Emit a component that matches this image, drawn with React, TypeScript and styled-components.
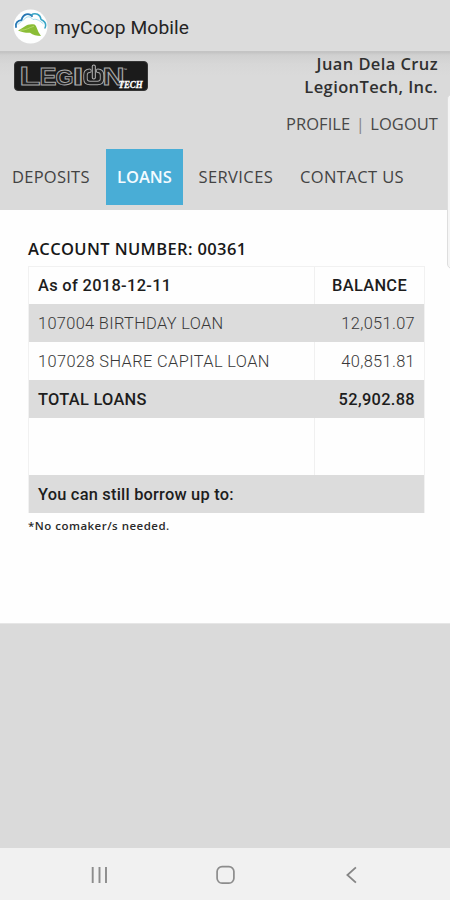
import React from "react";
import styled, { createGlobalStyle } from "styled-components";

const GlobalStyle = createGlobalStyle`
  * { box-sizing: border-box; }
  html, body { margin: 0; padding: 0; background: #fff; }
`;

const Screen = styled.div`
  position: relative;
  display: flex;
  flex-direction: column;
  width: 450px;
  height: 900px;
  overflow: hidden;
  background: #dadada;
  color: #222;
  font-family: "Open Sans", sans-serif;
`;

const AppBar = styled.header`
  display: flex;
  align-items: center;
  flex: none;
  gap: 6px;
  height: 52px;
  padding: 2px 12px 0;
  background: #dcdcdc;
  border-bottom: 1px solid #c4c4c4;
`;

const AppTitle = styled.h1`
  margin: 2px 0 0;
  font: 400 19.2px/28px Roboto, sans-serif;
  letter-spacing: 0.1px;
  color: #242424;
  white-space: nowrap;
`;

const SiteHeader = styled.section`
  flex: none;
  height: 158px;
  background: linear-gradient(#c2c2c2 0, #d0d0d0 3px, #d7d7d7 12px, #dadada 24px);
`;

const Masthead = styled.div`
  display: flex;
  justify-content: space-between;
  height: 97px;
  padding: 9px 12px 0 14px;
`;

const Account = styled.div`
  display: flex;
  flex-direction: column;
  align-items: flex-end;
  margin-top: -9px;
  white-space: nowrap;
`;

const Identity = styled.strong`
  font-size: 16.5px;
  font-weight: 600;
  line-height: 23px;
  letter-spacing: 0.4px;
  color: #303030;
`;

const AccountLinks = styled.div`
  display: flex;
  gap: 5.5px;
  margin-top: 14px;
  font-size: 16.5px;
  line-height: 23px;
  color: #858585;
`;

const AccountLink = styled.span`
  letter-spacing: 0.05px;
  color: #484848;
`;

const Tabs = styled.nav`
  display: grid;
  grid-template-columns: 94px 77px 107px 1fr;
  height: 56px;
  padding-left: 12px;
`;

const Tab = styled.div<{ $active?: boolean; $inset?: number; $spacing?: number }>`
  padding-left: ${(p) => p.$inset ?? 0}px;
  font-size: 16.5px;
  font-weight: ${(p) => (p.$active ? 600 : 500)};
  line-height: 56px;
  letter-spacing: ${(p) => p.$spacing ?? 0}px;
  color: ${(p) => (p.$active ? "#f3fbff" : "#434343")};
  background: ${(p) => (p.$active ? "#49add6" : "transparent")};
  white-space: nowrap;
`;

const Content = styled.main`
  flex: none;
  height: 413px;
  padding: 27px 25px 0 28px;
  background: #fefefe;
`;

const AccountNumber = styled.h2`
  margin: 0 0 5px;
  font-size: 16.5px;
  font-weight: 600;
  line-height: 24px;
  letter-spacing: 0.38px;
  color: #181818;
  white-space: nowrap;
`;

const LoanTable = styled.div`
  border: solid #f1f1f1;
  border-width: 1px 1px 0;
`;

const LoanRow = styled.div<{ $shaded?: boolean; $height?: number; $bold?: boolean }>`
  display: grid;
  grid-template-columns: 285px 1fr;
  grid-template-rows: 100%;
  height: ${(p) => p.$height ?? 38}px;
  background: ${(p) => (p.$shaded ? "#dcdcdc" : "#fefefe")};
  color: ${(p) => (p.$bold ? "#1d1d1d" : "#383838")};
  font-family: Roboto, sans-serif;
  font-size: 16.4px;
  font-weight: ${(p) => (p.$bold ? 500 : 300)};
  line-height: ${(p) => (p.$height ? 37 : 39)}px;
  white-space: nowrap;
  > :last-child {
    border-left: 1px solid ${(p) => (p.$shaded ? "#dcdcdc" : "#f0f0f0")};
  }
`;

const Cell = styled.div<{ $align?: string; $spacing?: number }>`
  padding: 0 9px;
  text-align: ${(p) => p.$align ?? "left"};
  letter-spacing: ${(p) => p.$spacing ?? 0.33}px;
`;

const Note = styled.p`
  margin: 4px 0 0;
  font-size: 11.5px;
  font-weight: 600;
  line-height: 17px;
  letter-spacing: 0.48px;
  color: #2a2a2a;
`;

const Footer = styled.footer`
  flex: 1;
  border-top: 1px solid #e6e6e6;
  background: #dadada;
`;

const SystemBar = styled.nav`
  display: flex;
  flex: none;
  justify-content: center;
  align-items: center;
  gap: 102px;
  height: 52px;
  padding-top: 1px;
  background: #f1f1f1;
`;

const EdgeHandle = styled.div`
  position: absolute;
  top: 94px;
  right: -7px;
  width: 10px;
  height: 175px;
  border: 1px solid #dedede;
  border-radius: 5px;
  background: #f6f6f6;
`;

const LogoBadge = styled.svg`
  display: block;
  overflow: visible;
`;

const CoopLogo = () => (
  <svg width="36" height="36" viewBox="0 0 36 36">
    <circle cx="18.5" cy="17.5" r="17" fill="#fdfefe" />
    <g fill="none" strokeLinecap="round" strokeLinejoin="round">
      <path d="M4 18C3 13.5 6 11.5 9.5 11.2C11 4.5 17 4 20 7" stroke="#2577b4" strokeWidth="1.8" />
      <path d="M19 6C23.5 3 28.5 5.5 29 10.5C33.5 12.5 34.5 15.5 33 19" stroke="#36a5c6" strokeWidth="1.5" />
      <path d="M6 15.5C8 12.5 10.5 12.5 13 9.5C16 6.5 19 8 21 10.5C25 9.5 28 12 31 14.5" stroke="#9fdcec" strokeWidth="1" />
    </g>
    <path d="M6 21.5C12 18.5 15 14 22.5 15.5C25 17 24.5 21 29 27C24.5 27 21 26 18 23.8C13.5 24 10 23 6 21.5Z" fill="#8abd36" />
    <path d="M8 21.2C14 21.5 17.5 18.5 22 17.2" fill="none" stroke="#b4d66c" strokeWidth="0.9" />
  </svg>
);

const LegionLogo = () => (
  <LogoBadge width="134" height="30" viewBox="0 0 134 30">
    <rect x="0.5" y="0.5" width="133" height="29" rx="3.5" fill="#1b1b1b" stroke="#353535" />
    <g fontFamily="Liberation Sans, sans-serif" fontWeight="700" fill="#222" stroke="#a9a9a9" strokeWidth="0.9">
      <text x="5.5" y="24" fontSize="26" textLength="21" lengthAdjust="spacingAndGlyphs">L</text>
      <text x="25.5" y="24" fontSize="23" textLength="17" lengthAdjust="spacingAndGlyphs">E</text>
      <text x="41.5" y="23.8" fontSize="22" textLength="18" lengthAdjust="spacingAndGlyphs">G</text>
      <text x="58.5" y="24" fontSize="23" textLength="11" lengthAdjust="spacingAndGlyphs">I</text>
      <text x="88.5" y="24" fontSize="23" textLength="22" lengthAdjust="spacingAndGlyphs">N</text>
    </g>
    <g fill="none" strokeLinecap="round" strokeLinejoin="round">
      <path d="M75.5 9.8Q71.5 10 71.5 14V18Q71.5 22 76 22H83.5Q88 22 88 18V14Q88 10 84 9.8" stroke="#a9a9a9" strokeWidth="4.4" />
      <path d="M75.5 9.8Q71.5 10 71.5 14V18Q71.5 22 76 22H83.5Q88 22 88 18V14Q88 10 84 9.8" stroke="#222" strokeWidth="2.6" />
      <path d="M79.8 5.5V16.5" stroke="#bcbcbc" strokeWidth="4" />
      <path d="M79.8 5.5V16.5" stroke="#222" strokeWidth="2.1" />
    </g>
    <text x="109" y="9.5" fill="#ccc" fontFamily="Liberation Sans, sans-serif" fontSize="4">™</text>
    <text x="104.5" y="27" fill="#fff" stroke="#fff" strokeWidth="0.35" fontFamily="Liberation Serif, serif" fontSize="9.5" fontWeight="700" fontStyle="italic" textLength="24" lengthAdjust="spacingAndGlyphs">TECH</text>
  </LogoBadge>
);

const RecentsIcon = () => (
  <svg width="24" height="24" viewBox="0 0 24 24" fill="none" stroke="#8c8c8c" strokeWidth="1.9">
    <path d="M5.7 4v16M12.5 4v16M19 4v16" />
  </svg>
);

const HomeIcon = () => (
  <svg width="24" height="24" viewBox="0 0 24 24" fill="none" stroke="#8c8c8c" strokeWidth="1.7">
    <rect x="4.1" y="3.6" width="16.8" height="16.6" rx="5" />
  </svg>
);

const BackIcon = () => (
  <svg width="24" height="24" viewBox="0 0 24 24" fill="none" stroke="#858585" strokeWidth="1.8">
    <path d="M16.9 4.3L8.4 12l8.5 7.7" />
  </svg>
);

export default function App() {
  return (
    <>
      <GlobalStyle />
      <Screen>
        <AppBar>
          <CoopLogo />
          <AppTitle>myCoop Mobile</AppTitle>
        </AppBar>
        <SiteHeader>
          <Masthead>
            <LegionLogo />
            <Account>
              <Identity>Juan Dela Cruz</Identity>
              <Identity>LegionTech, Inc.</Identity>
              <AccountLinks>
                <AccountLink>PROFILE</AccountLink>|<AccountLink>LOGOUT</AccountLink>
              </AccountLinks>
            </Account>
          </Masthead>
          <Tabs>
            <Tab $spacing={0.25}>DEPOSITS</Tab>
            <Tab $active $inset={11}>LOANS</Tab>
            <Tab $inset={15.5} $spacing={0.4}>SERVICES</Tab>
            <Tab $inset={10} $spacing={0.4}>CONTACT US</Tab>
          </Tabs>
        </SiteHeader>
        <Content>
          <AccountNumber>ACCOUNT NUMBER: 00361</AccountNumber>
          <LoanTable>
            <LoanRow $bold $height={37}>
              <Cell>As of 2018-12-11</Cell>
              <Cell $align="center">BALANCE</Cell>
            </LoanRow>
            <LoanRow $shaded>
              <Cell>107004 BIRTHDAY LOAN</Cell>
              <Cell $align="right">12,051.07</Cell>
            </LoanRow>
            <LoanRow>
              <Cell $spacing={0.39}>107028 SHARE CAPITAL LOAN</Cell>
              <Cell $align="right">40,851.81</Cell>
            </LoanRow>
            <LoanRow $shaded $bold>
              <Cell $spacing={0.28}>TOTAL LOANS</Cell>
              <Cell $align="right">52,902.88</Cell>
            </LoanRow>
            <LoanRow $height={57}>
              <Cell />
              <Cell />
            </LoanRow>
            <LoanRow $shaded $bold>
              <Cell $spacing={0.22}>You can still borrow up to:</Cell>
              <Cell />
            </LoanRow>
          </LoanTable>
          <Note>*No comaker/s needed.</Note>
        </Content>
        <Footer />
        <SystemBar>
          <RecentsIcon />
          <HomeIcon />
          <BackIcon />
        </SystemBar>
        <EdgeHandle />
      </Screen>
    </>
  );
}
